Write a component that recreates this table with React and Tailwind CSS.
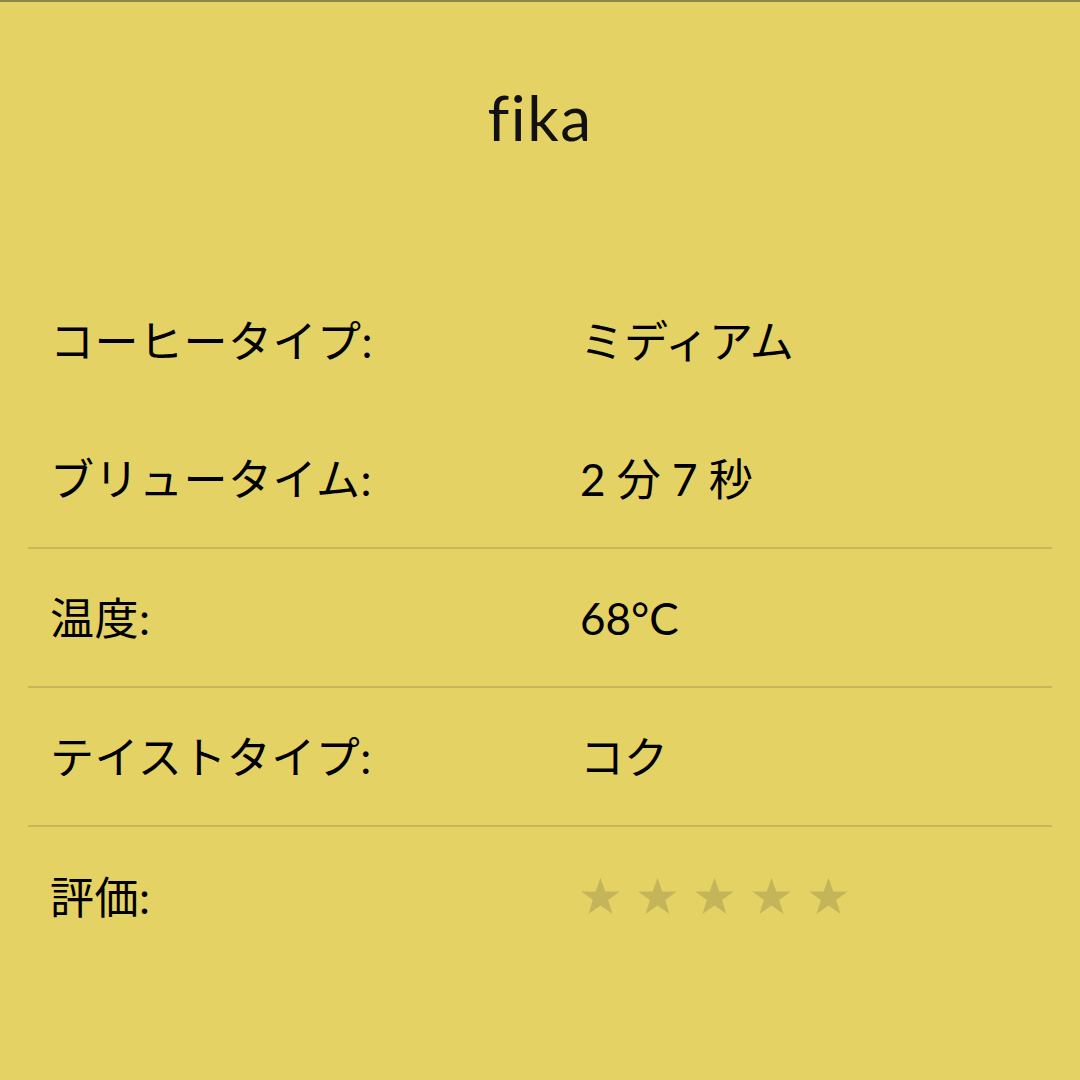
import React from "react";

const FONT = { fontFamily: "Lato, 'Noto Sans CJK JP', 'Noto Sans', sans-serif" };

function Star() {
  return (
    <svg width="41" height="39" viewBox="0 0 24 23" className="fill-[#c5b55a]">
      <path d="M12 0.5l2.8 8.1h8.6l-6.9 5 2.6 8.2L12 16.8l-7.1 5 2.6-8.2-6.9-5h8.6z" />
    </svg>
  );
}

function Row({ label, children, divider }) {
  return (
    <div className={`h-[139px] flex items-center ${divider ? "border-b-2 border-[#c8b65c]" : ""}`}>
      <div className="w-[552px] pl-[22px] text-[44px] tracking-[0.5px] text-black leading-none">{label}</div>
      <div className="text-[44px] text-black leading-none">{children}</div>
    </div>
  );
}

export default function App() {
  return (
    <div className="w-[1080px] h-[1080px] bg-[#e5d264] border-t-2 border-[#8c8648] overflow-hidden" style={FONT}>
      <div className="h-[269px] flex justify-center pt-[84px]">
        <div className="text-[62px] leading-none text-[#111] tracking-wide">fika</div>
      </div>
      <div className="mx-[28px]">
        <Row label="コーヒータイプ:">ミディアム</Row>
        <Row label="ブリュータイム:" divider>2 分 7 秒</Row>
        <Row label="温度:" divider>68°C</Row>
        <Row label="テイストタイプ:" divider>コク</Row>
        <Row label="評価:">
          <div className="flex gap-[16px]">
            <Star /><Star /><Star /><Star /><Star />
          </div>
        </Row>
      </div>
    </div>
  );
}
